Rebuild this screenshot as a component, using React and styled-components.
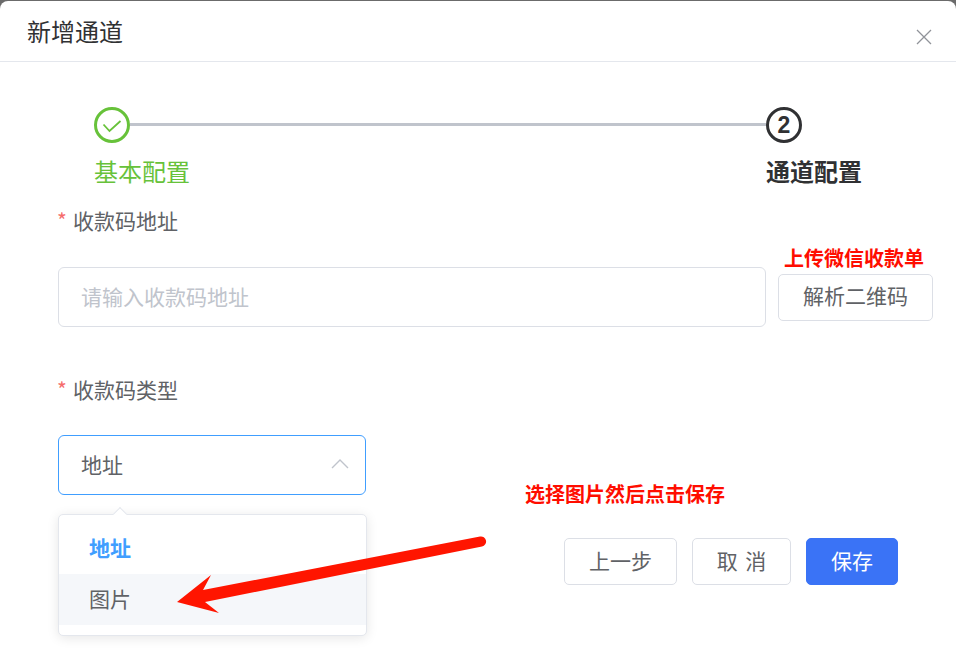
import React from "react";
import styled, { createGlobalStyle } from "styled-components";

const Global = createGlobalStyle`
  html, body { margin: 0; padding: 0; background: #6b6b6b; }
  body { font-family: "Noto Sans CJK SC", "Liberation Sans", sans-serif; }
  * { box-sizing: border-box; }
`;

const Page = styled.div`
  position: relative;
  width: 956px;
  height: 667px;
  overflow: hidden;
  padding-top: 1px;
  background: #6b6b6b;
`;

const Dialog = styled.div`
  height: 666px;
  background: #fff;
  border-radius: 8px 8px 0 0;
`;

const Header = styled.header`
  display: flex;
  align-items: center;
  justify-content: space-between;
  height: 61px;
  padding: 0 24px 0 27px;
  border-bottom: 1px solid #e4e7ed;
`;

const Title = styled.h1`
  margin: 0;
  font-size: 24px;
  font-weight: 400;
  line-height: 60px;
  color: #303133;
`;

const Close = styled.span`
  display: flex;
  margin-top: 12px;
  color: #909399;
`;

const Steps = styled.div`
  display: flex;
  padding: 45px 94px 0;
  justify-content: space-between;
`;

const Step = styled.div`
  flex: ${(p) => (p.$grow ? 1 : "0 0 auto")};
  width: ${(p) => (p.$grow ? "auto" : "96px")};
  color: ${(p) => p.$color};
  font-weight: ${(p) => (p.$bold ? 700 : 400)};
`;

const StepHead = styled.div`
  display: flex;
  align-items: center;
  height: 36px;
`;

const Line = styled.div`
  flex: 1;
  height: 3px;
  margin-top: -2px;
  background: #c0c4cc;
`;

const Circle = styled.div`
  flex: 0 0 36px;
  display: flex;
  align-items: center;
  justify-content: center;
  width: 36px;
  height: 36px;
  border: 3px solid currentColor;
  border-radius: 50%;
  font-size: 23px;
  font-weight: 700;
  font-family: "Liberation Sans", sans-serif;
`;

const StepTitle = styled.div`
  margin-top: 10px;
  font-size: 24px;
  line-height: 36px;
  white-space: nowrap;
`;

const Form = styled.div`
  padding: 0 23px 0 58px;
`;

const Label = styled.div`
  display: flex;
  align-items: center;
  height: 36px;
  margin-top: ${(p) => p.$top}px;
  font-size: 21px;
  color: #606266;
`;

const Star = styled.span`
  width: 15px;
  margin-left: -1px;
  margin-right: 1px;
  color: #f56c6c;
`;

const Row = styled.div`
  display: flex;
  align-items: center;
  gap: 12px;
  margin-top: ${(p) => p.$top}px;
`;

const Input = styled.div`
  display: flex;
  align-items: center;
  justify-content: space-between;
  width: ${(p) => p.$width}px;
  height: 60px;
  padding: 0 16px 3px 22px;
  border: 1px solid ${(p) => p.$border};
  border-radius: 6px;
  font-size: 21px;
  color: ${(p) => p.$color};
  background: #fff;
`;

const Button = styled.button`
  display: flex;
  align-items: center;
  justify-content: center;
  width: ${(p) => p.$width}px;
  height: 47px;
  padding: 0 0 4px;
  border: 1px solid ${(p) => (p.$primary ? "#3a73f6" : "#dcdfe6")};
  border-radius: 5px;
  background: ${(p) => (p.$primary ? "#3a73f6" : "#fff")};
  color: ${(p) => (p.$primary ? "#fff" : "#606266")};
  font-family: inherit;
  font-size: 21px;
  white-space: pre;
  word-spacing: 3px;
`;

const Footer = styled.div`
  display: flex;
  justify-content: flex-end;
  gap: 15px;
  margin-top: 43px;
  padding-right: 35px;
`;

const Menu = styled.div`
  position: absolute;
  left: 58px;
  top: 514px;
  width: 309px;
  height: 122px;
  padding: 10px 0;
  background: #fff;
  border: 1px solid #e4e7ed;
  border-radius: 5px;
  box-shadow: 0 2px 12px rgba(0, 0, 0, 0.1);
`;

const Caret = styled.div`
  position: absolute;
  left: 56px;
  top: -6px;
  width: 10px;
  height: 10px;
  background: #fff;
  border-top: 1px solid #e4e7ed;
  border-left: 1px solid #e4e7ed;
  transform: rotate(45deg);
`;

const Item = styled.div`
  display: flex;
  align-items: center;
  height: ${(p) => p.$height}px;
  padding: 0 0 ${(p) => (p.$active ? 5 : 3)}px 30px;
  font-size: 21px;
  font-weight: ${(p) => (p.$active ? 700 : 400)};
  color: ${(p) => (p.$active ? "#409eff" : "#606266")};
  background: ${(p) => (p.$hover ? "#f5f7fa" : "transparent")};
`;

const Note = styled.div`
  position: absolute;
  left: ${(p) => p.$x}px;
  top: ${(p) => p.$y}px;
  font-size: 20px;
  font-weight: 700;
  line-height: 28px;
  color: #ff0d00;
  white-space: nowrap;
`;

const Arrow = styled.svg`
  position: absolute;
  left: 0;
  top: 0;
  pointer-events: none;
`;

export default function App() {
  return (
    <Page>
      <Global />
      <Dialog>
        <Header>
          <Title>新增通道</Title>
          <Close>
            <svg width="16" height="16" viewBox="0 0 16 16" fill="none" stroke="currentColor" strokeWidth="1.3">
              <path d="M1 1l14 14M15 1L1 15" />
            </svg>
          </Close>
        </Header>
        <Steps>
          <Step $grow $color="#67c23a">
            <StepHead>
              <Circle>
                <svg width="22" height="22" viewBox="0 0 22 22" fill="none" stroke="currentColor" strokeWidth="1.8">
                  <path d="M2.500 10.500L8.500 17L19.500 7" />
                </svg>
              </Circle>
              <Line />
            </StepHead>
            <StepTitle>基本配置</StepTitle>
          </Step>
          <Step $color="#303133" $bold>
            <StepHead>
              <Circle>2</Circle>
            </StepHead>
            <StepTitle>通道配置</StepTitle>
          </Step>
        </Steps>
        <Form>
          <Label $top={13}>
            <Star>*</Star>收款码地址
          </Label>
          <Row $top={29}>
            <Input $width={708} $border="#dcdfe6" $color="#c0c4cc">请输入收款码地址</Input>
            <Button $width={155}>解析二维码</Button>
          </Row>
          <Label $top={44}>
            <Star>*</Star>收款码类型
          </Label>
          <Row $top={28}>
            <Input $width={308} $border="#409eff" $color="#606266">
              地址
              <svg width="18" height="10" viewBox="0 0 18 10" fill="none" stroke="#c0c4cc" strokeWidth="1.4">
                <path d="M1 9l8-8 8 8" />
              </svg>
            </Input>
          </Row>
          <Footer>
            <Button $width={113}>上一步</Button>
            <Button $width={99}>取 消</Button>
            <Button $width={92} $primary>保存</Button>
          </Footer>
        </Form>
      </Dialog>
      <Menu>
        <Caret />
        <Item $active $height={49}>地址</Item>
        <Item $hover $height={51}>图片</Item>
      </Menu>
      <Note $x={784} $y={244}>上传微信收款单</Note>
      <Note $x={525} $y={480}>选择图片然后点击保存</Note>
      <Arrow width="956" height="667" viewBox="0 0 956 667">
        <path d="M480 536.500 A5 5 0 0 1 482 546.500 L205 602 L219 613 L177 602 L211 575 L203 590 Z" fill="#ff1500" />
      </Arrow>
    </Page>
  );
}
